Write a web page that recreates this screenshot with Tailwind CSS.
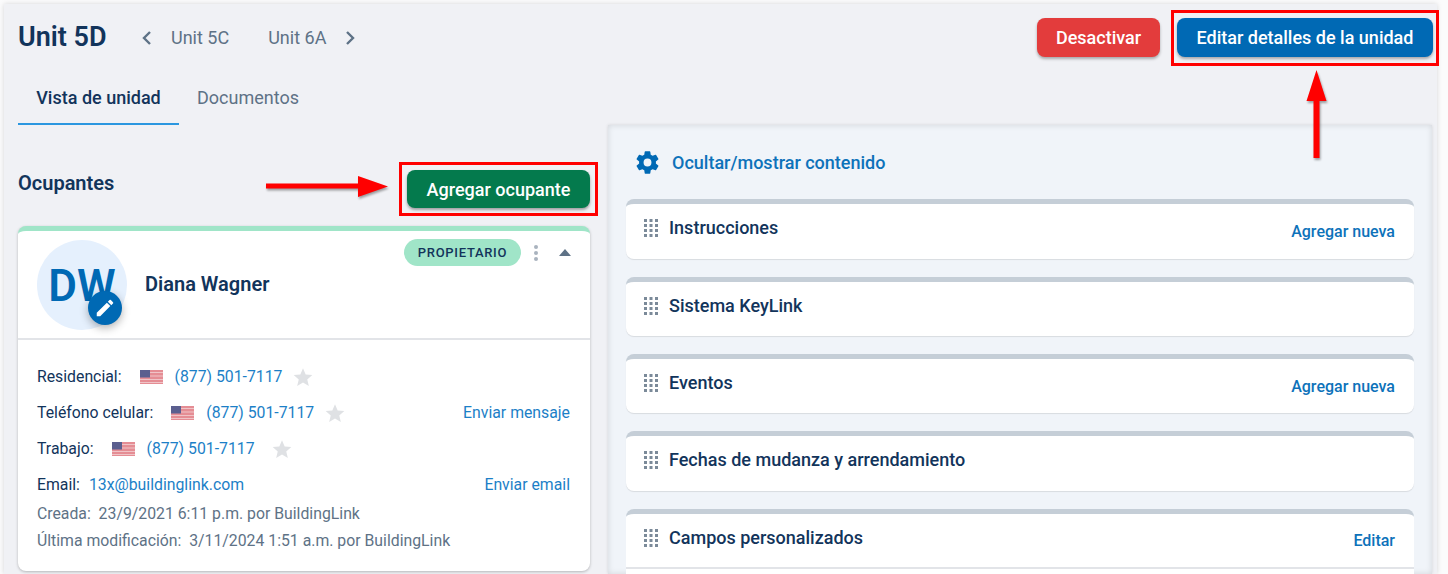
<!DOCTYPE html>
<html lang="es">
<head>
    <meta charset="UTF-8">
    <meta name="viewport" content="width=device-width, initial-scale=1.0">
    <title>Unit 5D</title>
    <script src="https://cdn.jsdelivr.net/npm/@tailwindcss/browser@4"></script>
</head>
<body class="bg-[#fbfbfc] font-['Roboto',sans-serif] text-[#12345b] overflow-hidden">
    <div class="relative h-[574px] w-[1448px] overflow-hidden pl-[4px] pt-[4px]">
        <!-- Panel principal -->
        <div class="h-[570px] w-[1433px] bg-[#f0f1f5] shadow-[0_0_5px_rgba(0,0,0,0.15)]">
            <!-- Encabezado -->
            <div class="flex h-[53px] items-center pl-[14px] pr-[4px] pt-[14px]">
                <h1 class="w-[117px] text-[27px] font-semibold leading-none">Unit 5D</h1>
                <svg class="w-[24px] h-[24px]" viewBox="0 0 24 24" fill="none" stroke="#5e7286" stroke-width="2.4"><path d="M15 6l-6 6 6 6"/></svg>
                <span class="ml-[12px] text-[18px] text-[#5e7286]">Unit 5C</span>
                <span class="ml-[39px] text-[18px] text-[#5e7286]">Unit 6A</span>
                <svg class="ml-[12px] w-[24px] h-[24px]" viewBox="0 0 24 24" fill="none" stroke="#5e7286" stroke-width="2.4"><path d="M9 6l6 6-6 6"/></svg>
                <button class="ml-auto h-[39px] w-[123px] rounded-lg bg-[#e33c3c] text-[18px] font-medium text-white shadow-[0_2px_3px_rgba(0,0,0,0.3)]">Desactivar</button>
                <button class="ml-[17px] h-[39px] w-[256px] rounded-lg bg-[#0069b4] text-[18px] font-medium text-white shadow-[0_2px_3px_rgba(0,0,0,0.3)]">Editar detalles de la unidad</button>
            </div>

            <!-- Tabs -->
            <div class="flex pl-[14px] pt-[12px] text-[18px]">
                <div class="flex h-[56px] w-[161px] items-center justify-center border-b-2 border-[#2b97e0] pt-[2px] font-medium">Vista de unidad</div>
                <div class="flex h-[56px] items-center pl-[18px] text-[#5e7286]">Documentos</div>
            </div>

            <div class="flex pl-[14px]">
                <!-- Ocupantes -->
                <div class="w-[572px]">
                    <div class="flex h-[101px] items-start justify-between">
                        <h2 class="mt-[46px] text-[20px] font-semibold leading-[24px]">Ocupantes</h2>
                        <button class="mt-[45px] h-[38px] w-[183px] rounded-lg bg-[#047a4d] pt-[1px] text-[18px] font-medium text-white shadow-[0_2px_3px_rgba(0,0,0,0.35)]">Agregar ocupante</button>
                    </div>
                    <div class="h-[345px] rounded-lg border-t-[5px] border-[#a0e5c8] bg-white shadow-[0_1px_3px_rgba(0,0,0,0.25)]">
                        <div class="relative flex h-[109px] items-start border-b-2 border-[#e2e4e8] pl-[19px] pt-[9px]">
                            <div class="relative flex h-[90px] w-[90px] shrink-0 items-center justify-center rounded-full bg-[#e5f0fd] text-[44px] font-semibold leading-none text-[#0069b4]">
                                <span class="pt-[2px]">DW</span>
                                <div class="absolute bottom-[5px] right-[5px] flex h-[34px] w-[34px] items-center justify-center rounded-full bg-[#0069b4] shadow-[0_3px_8px_rgba(0,0,0,0.3)]">
                                    <svg class="h-[22px] w-[22px]" viewBox="0 0 24 24" fill="#fff"><path d="M3 17.25V21h3.75L17.81 9.94l-3.75-3.75L3 17.25zM20.71 7.04a1 1 0 0 0 0-1.41l-2.34-2.34a1 1 0 0 0-1.41 0l-1.83 1.83 3.75 3.75 1.83-1.83z"/></svg>
                                </div>
                            </div>
                            <div class="ml-[18px] mt-[31px] text-[20px] font-semibold leading-[26px]">Diana Wagner</div>
                            <div class="absolute right-[19px] top-[8px] flex items-center">
                                <span class="flex h-[27px] w-[117px] items-center justify-center rounded-full bg-[#a0e5c8] text-[13px] font-medium tracking-[0.7px]">PROPIETARIO</span>
                                <svg class="ml-[11px] h-[18px] w-[8px]" viewBox="0 0 8 18" fill="#a9b3be"><circle cx="4" cy="3" r="2"/><circle cx="4" cy="9" r="2"/><circle cx="4" cy="15" r="2"/></svg>
                                <svg class="ml-[19px] h-[7px] w-[12px]" viewBox="0 0 12 7" fill="#5e7286"><path d="M6 0l6 7H0z"/></svg>
                            </div>
                        </div>
                        <div class="pl-[19px] pr-[20px] pt-[19px] text-[15.8px] leading-[36px]">
                            <div class="flex h-[36px] items-center">
                                <span>Residencial:</span>
                                <svg class="ml-[19px] h-[14px] w-[23px]" viewBox="0 0 23 14"><rect width="23" height="14" fill="#e58d94"/><path d="M0 2.500h23M0 6h23M0 9.500h23M0 12.500h23" stroke="#f0c4c7" stroke-width="1"/><rect width="10" height="7.500" fill="#5b5f8f"/></svg>
                                <span class="ml-[11px] text-[#1c7fc7]">(877) 501-7117</span>
                                <svg class="ml-[11px] h-[20px] w-[20px]" viewBox="0 0 24 24" fill="#dfe1e4"><path d="M12 1.500l3.200 7.400 8 .7-6.100 5.300 1.900 7.900-7-4.200-7 4.200 1.900-7.900L.8 9.600l8-.7z"/></svg>
                            </div>
                            <div class="flex h-[36px] items-center">
                                <span>Teléfono celular:</span>
                                <svg class="ml-[18px] h-[14px] w-[23px]" viewBox="0 0 23 14"><rect width="23" height="14" fill="#e58d94"/><path d="M0 2.500h23M0 6h23M0 9.500h23M0 12.500h23" stroke="#f0c4c7" stroke-width="1"/><rect width="10" height="7.500" fill="#5b5f8f"/></svg>
                                <span class="ml-[12px] text-[#1c7fc7]">(877) 501-7117</span>
                                <svg class="ml-[11px] h-[20px] w-[20px]" viewBox="0 0 24 24" fill="#dfe1e4"><path d="M12 1.500l3.200 7.400 8 .7-6.100 5.300 1.900 7.900-7-4.200-7 4.200 1.900-7.900L.8 9.600l8-.7z"/></svg>
                                <span class="ml-auto text-[#1c7fc7]">Enviar mensaje</span>
                            </div>
                            <div class="flex h-[36px] items-center">
                                <span>Trabajo:</span>
                                <svg class="ml-[18px] h-[14px] w-[23px]" viewBox="0 0 23 14"><rect width="23" height="14" fill="#e58d94"/><path d="M0 2.500h23M0 6h23M0 9.500h23M0 12.500h23" stroke="#f0c4c7" stroke-width="1"/><rect width="10" height="7.500" fill="#5b5f8f"/></svg>
                                <span class="ml-[12px] text-[#1c7fc7]">(877) 501-7117</span>
                                <svg class="ml-[17px] h-[20px] w-[20px]" viewBox="0 0 24 24" fill="#dfe1e4"><path d="M12 1.500l3.200 7.400 8 .7-6.100 5.300 1.900 7.900-7-4.200-7 4.200 1.900-7.900L.8 9.600l8-.7z"/></svg>
                            </div>
                            <div class="flex h-[36px] items-center">
                                <span>Email:</span>
                                <span class="ml-[9px] text-[#1c7fc7]">13x@buildinglink.com</span>
                                <span class="ml-auto text-[#1c7fc7]">Enviar email</span>
                            </div>
                            <div class="flex h-[22px] items-center text-[#5e7286]">Creada:&nbsp; 23/9/2021 6:11 p.m. por BuildingLink</div>
                            <div class="mt-[3px] flex h-[26px] items-center text-[#5e7286]">Última modificación:&nbsp; 3/11/2024 1:51 a.m. por BuildingLink</div>
                        </div>
                    </div>
                </div>

                <!-- Panel derecho -->
                <div class="ml-[18px] h-[449px] w-[824px] bg-[#f0f4f9] px-[18px] shadow-[inset_0_0_6px_rgba(0,0,0,0.12),0_0_3px_rgba(0,0,0,0.12)]">
                    <div class="flex h-[74px] items-center pl-[8px] text-[18px] font-medium text-[#0d72ba]">
                        <svg class="h-[27px] w-[27px]" viewBox="0 0 24 24" fill="#0069b4"><path d="M19.430 12.980c.040-.320.070-.640.070-.980s-.030-.660-.070-.980l2.110-1.650a.5.500 0 0 0 .120-.640l-2-3.460a.5.500 0 0 0-.610-.220l-2.490 1a7.300 7.300 0 0 0-1.690-.980l-.380-2.650A.49.490 0 0 0 14 2h-4a.49.490 0 0 0-.490.420l-.380 2.650c-.610.250-1.170.590-1.690.980l-2.490-1a.49.490 0 0 0-.610.220l-2 3.460a.49.490 0 0 0 .120.640l2.110 1.650c-.040.320-.070.650-.070.980s.030.660.070.980l-2.110 1.650a.5.500 0 0 0-.120.640l2 3.460c.120.220.390.300.610.220l2.490-1c.520.400 1.080.730 1.690.980l.380 2.650c.030.240.240.420.490.420h4c.250 0 .460-.180.490-.420l.380-2.650c.610-.250 1.170-.590 1.690-.980l2.490 1c.230.090.490 0 .610-.220l2-3.460a.5.500 0 0 0-.120-.640l-2.110-1.650zM12 15.500a3.500 3.500 0 1 1 0-7 3.500 3.500 0 0 1 0 7z"/></svg>
                        <span class="ml-[11px]">Ocultar/mostrar contenido</span>
                    </div>
                    <div class="flex flex-col gap-[18px]">
                        <div class="flex h-[60px] items-center justify-between rounded-lg border-t-[5px] border-[#c5ced7] bg-white pb-[8px] pl-[17px] pr-[19px] shadow-[0_1px_1px_rgba(0,0,0,0.1)]">
                            <div class="flex items-center gap-[10px] text-[18px] font-medium">
                                <svg class="h-[19px] w-[16px]" viewBox="0 0 16 19" fill="#7b8a99"><path d="M1 1h3v3H1zM6.500 1h3v3h-3zM12 1h3v3h-3zM1 6h3v3H1zM6.500 6h3v3h-3zM12 6h3v3h-3zM1 11h3v3H1zM6.500 11h3v3h-3zM12 11h3v3h-3zM1 16h3v3H1zM6.500 16h3v3h-3zM12 16h3v3h-3z"/></svg>
                                Instrucciones
                            </div>
                            <span class="mt-[9px] text-[16px] font-medium text-[#0d72ba]">Agregar nueva</span>
                        </div>
                        <div class="flex h-[59px] items-center justify-between rounded-lg border-t-[5px] border-[#c5ced7] bg-white pb-[7px] pl-[17px] pr-[19px] shadow-[0_1px_1px_rgba(0,0,0,0.1)]">
                            <div class="flex items-center gap-[10px] text-[18px] font-medium">
                                <svg class="h-[19px] w-[16px]" viewBox="0 0 16 19" fill="#7b8a99"><path d="M1 1h3v3H1zM6.500 1h3v3h-3zM12 1h3v3h-3zM1 6h3v3H1zM6.500 6h3v3h-3zM12 6h3v3h-3zM1 11h3v3H1zM6.500 11h3v3h-3zM12 11h3v3h-3zM1 16h3v3H1zM6.500 16h3v3h-3zM12 16h3v3h-3z"/></svg>
                                Sistema KeyLink
                            </div>
                        </div>
                        <div class="flex h-[59px] items-center justify-between rounded-lg border-t-[5px] border-[#c5ced7] bg-white pb-[7px] pl-[17px] pr-[19px] shadow-[0_1px_1px_rgba(0,0,0,0.1)]">
                            <div class="flex items-center gap-[10px] text-[18px] font-medium">
                                <svg class="h-[19px] w-[16px]" viewBox="0 0 16 19" fill="#7b8a99"><path d="M1 1h3v3H1zM6.500 1h3v3h-3zM12 1h3v3h-3zM1 6h3v3H1zM6.500 6h3v3h-3zM12 6h3v3h-3zM1 11h3v3H1zM6.500 11h3v3h-3zM12 11h3v3h-3zM1 16h3v3H1zM6.500 16h3v3h-3zM12 16h3v3h-3z"/></svg>
                                Eventos
                            </div>
                            <span class="mt-[9px] text-[16px] font-medium text-[#0d72ba]">Agregar nueva</span>
                        </div>
                        <div class="flex h-[60px] items-center justify-between rounded-lg border-t-[5px] border-[#c5ced7] bg-white pb-[8px] pl-[17px] pr-[19px] shadow-[0_1px_1px_rgba(0,0,0,0.1)]">
                            <div class="flex items-center gap-[10px] text-[18px] font-medium">
                                <svg class="h-[19px] w-[16px]" viewBox="0 0 16 19" fill="#7b8a99"><path d="M1 1h3v3H1zM6.500 1h3v3h-3zM12 1h3v3h-3zM1 6h3v3H1zM6.500 6h3v3h-3zM12 6h3v3h-3zM1 11h3v3H1zM6.500 11h3v3h-3zM12 11h3v3h-3zM1 16h3v3H1zM6.500 16h3v3h-3zM12 16h3v3h-3z"/></svg>
                                Fechas de mudanza y arrendamiento
                            </div>
                        </div>
                        <div class="h-[80px] rounded-t-lg border-t-[5px] border-[#c5ced7] bg-white">
                            <div class="flex h-[55px] items-center justify-between border-b-2 border-[#e2e4e8] pb-[6px] pl-[17px] pr-[19px]">
                                <div class="flex items-center gap-[10px] text-[18px] font-medium">
                                    <svg class="h-[19px] w-[16px]" viewBox="0 0 16 19" fill="#7b8a99"><path d="M1 1h3v3H1zM6.500 1h3v3h-3zM12 1h3v3h-3zM1 6h3v3H1zM6.500 6h3v3h-3zM12 6h3v3h-3zM1 11h3v3H1zM6.500 11h3v3h-3zM12 11h3v3h-3zM1 16h3v3H1zM6.500 16h3v3h-3zM12 16h3v3h-3z"/></svg>
                                    Campos personalizados
                                </div>
                                <span class="mt-[7px] text-[16px] font-medium text-[#0d72ba]">Editar</span>
                            </div>
                        </div>
                    </div>
                </div>
            </div>
        </div>

        <!-- Anotaciones en rojo -->
        <div class="absolute left-[1171px] top-[10px] h-[56px] w-[268px] border-[3px] border-[#ff0000]"></div>
        <div class="absolute left-[399px] top-[162px] h-[54px] w-[199px] border-[3px] border-[#ff0000]"></div>
        <svg class="absolute left-[260px] top-[170px] h-[34px] w-[136px]" viewBox="0 0 136 34" fill="#ff0000"><path d="M6 13.500h92V6l30 10.500-30 10.500v-8.500H6z" style="filter:drop-shadow(1px 2px 1px rgba(0,0,0,.35))"/></svg>
        <svg class="absolute left-[1299px] top-[66px] h-[100px] w-[36px]" viewBox="0 0 36 100" fill="#ff0000"><path d="M17.500 4l10 31h-7v57h-6V35h-7z" style="filter:drop-shadow(1px 2px 1px rgba(0,0,0,.35))"/></svg>
    </div>
</body>
</html>
